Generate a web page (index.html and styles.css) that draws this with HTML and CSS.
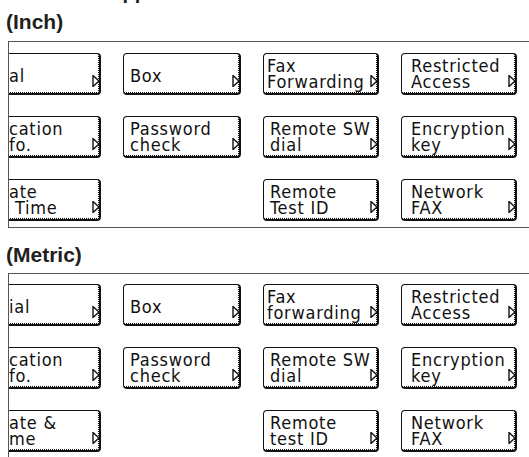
FILE: index.html
```html
<!DOCTYPE html>
<html lang="en">
<head>
  <meta charset="UTF-8" />
  <meta name="viewport" content="width=device-width, initial-scale=1.0"/>
  <title>Fax Settings Panels</title>
  <link rel="stylesheet" href="styles.css">
</head>
<body>

  <div class="cut-line"><span>Applications</span></div>

  <h2>(Inch)</h2>
  <div class="panel">
    <div class="grid">
      <div class="btn edge"><span class="label single">al</span><svg class="arrow" width="8" height="12" viewBox="0 0 8 12"><path d="M1 .5 L7 6 L1 11.5 Z"/></svg></div>
      <div class="btn"><span class="label single">Box</span><svg class="arrow" width="8" height="12" viewBox="0 0 8 12"><path d="M1 .5 L7 6 L1 11.5 Z"/></svg></div>
      <div class="btn tight"><span class="label">Fax<br>Forwarding</span><svg class="arrow" width="8" height="12" viewBox="0 0 8 12"><path d="M1 .5 L7 6 L1 11.5 Z"/></svg></div>
      <div class="btn roomy"><span class="label">Restricted<br>Access</span><svg class="arrow" width="8" height="12" viewBox="0 0 8 12"><path d="M1 .5 L7 6 L1 11.5 Z"/></svg></div>

      <div class="btn edge"><span class="label">cation<br>fo.</span><svg class="arrow" width="8" height="12" viewBox="0 0 8 12"><path d="M1 .5 L7 6 L1 11.5 Z"/></svg></div>
      <div class="btn"><span class="label">Password<br>check</span><svg class="arrow" width="8" height="12" viewBox="0 0 8 12"><path d="M1 .5 L7 6 L1 11.5 Z"/></svg></div>
      <div class="btn"><span class="label">Remote SW<br>dial</span><svg class="arrow" width="8" height="12" viewBox="0 0 8 12"><path d="M1 .5 L7 6 L1 11.5 Z"/></svg></div>
      <div class="btn roomy"><span class="label">Encryption<br>key</span><svg class="arrow" width="8" height="12" viewBox="0 0 8 12"><path d="M1 .5 L7 6 L1 11.5 Z"/></svg></div>

      <div class="btn edge"><span class="label">ate<br>&nbsp;Time</span><svg class="arrow" width="8" height="12" viewBox="0 0 8 12"><path d="M1 .5 L7 6 L1 11.5 Z"/></svg></div>
      <div></div>
      <div class="btn"><span class="label">Remote<br>Test ID</span><svg class="arrow" width="8" height="12" viewBox="0 0 8 12"><path d="M1 .5 L7 6 L1 11.5 Z"/></svg></div>
      <div class="btn roomy"><span class="label">Network<br>FAX</span><svg class="arrow" width="8" height="12" viewBox="0 0 8 12"><path d="M1 .5 L7 6 L1 11.5 Z"/></svg></div>
    </div>
  </div>

  <h2 class="second">(Metric)</h2>
  <div class="panel open">
    <div class="grid">
      <div class="btn edge"><span class="label single">ial</span><svg class="arrow" width="8" height="12" viewBox="0 0 8 12"><path d="M1 .5 L7 6 L1 11.5 Z"/></svg></div>
      <div class="btn"><span class="label single">Box</span><svg class="arrow" width="8" height="12" viewBox="0 0 8 12"><path d="M1 .5 L7 6 L1 11.5 Z"/></svg></div>
      <div class="btn tight"><span class="label">Fax<br>forwarding</span><svg class="arrow" width="8" height="12" viewBox="0 0 8 12"><path d="M1 .5 L7 6 L1 11.5 Z"/></svg></div>
      <div class="btn roomy"><span class="label">Restricted<br>Access</span><svg class="arrow" width="8" height="12" viewBox="0 0 8 12"><path d="M1 .5 L7 6 L1 11.5 Z"/></svg></div>

      <div class="btn edge"><span class="label">cation<br>fo.</span><svg class="arrow" width="8" height="12" viewBox="0 0 8 12"><path d="M1 .5 L7 6 L1 11.5 Z"/></svg></div>
      <div class="btn"><span class="label">Password<br>check</span><svg class="arrow" width="8" height="12" viewBox="0 0 8 12"><path d="M1 .5 L7 6 L1 11.5 Z"/></svg></div>
      <div class="btn"><span class="label">Remote SW<br>dial</span><svg class="arrow" width="8" height="12" viewBox="0 0 8 12"><path d="M1 .5 L7 6 L1 11.5 Z"/></svg></div>
      <div class="btn roomy"><span class="label">Encryption<br>key</span><svg class="arrow" width="8" height="12" viewBox="0 0 8 12"><path d="M1 .5 L7 6 L1 11.5 Z"/></svg></div>

      <div class="btn edge"><span class="label">ate &amp;<br>me</span><svg class="arrow" width="8" height="12" viewBox="0 0 8 12"><path d="M1 .5 L7 6 L1 11.5 Z"/></svg></div>
      <div></div>
      <div class="btn"><span class="label">Remote<br>test ID</span><svg class="arrow" width="8" height="12" viewBox="0 0 8 12"><path d="M1 .5 L7 6 L1 11.5 Z"/></svg></div>
      <div class="btn roomy"><span class="label">Network<br>FAX</span><svg class="arrow" width="8" height="12" viewBox="0 0 8 12"><path d="M1 .5 L7 6 L1 11.5 Z"/></svg></div>
    </div>
  </div>

</body>
</html>
```

FILE: styles.css
```css
body {
  margin: 0;
  background: #fff;
  font-family: "Liberation Sans", Arial, sans-serif;
  color: #231f20;
  overflow: hidden;
}
.cut-line {
  height: 3px;
  overflow: hidden;
}
.cut-line span {
  display: block;
  margin: -20px 0 0 108px;
  font-size: 20px;
  line-height: 24px;
  font-weight: bold;
}
h2 {
  margin: 7px 0 7px 6px;
  font-size: 21px;
  line-height: 24px;
  font-weight: bold;
}
h2.second {
  margin-top: 15px;
  margin-bottom: 6px;
}
.panel {
  margin: 0 -20px 0 8px;
  border: 1px solid #555;
  border-right: none;
  padding: 11px 0 6px;
  overflow: hidden;
}
.panel.open {
  border-bottom: none;
  padding-top: 10px;
}
.grid {
  display: grid;
  grid-template-columns: 118px 118px 116px 116px;
  column-gap: 22px;
  row-gap: 21px;
  margin-left: -26px;
}
.btn {
  height: 42px;
  box-sizing: border-box;
  display: flex;
  align-items: center;
  padding-left: 6px;
  border: 1px solid #111;
  border-right-width: 2px;
  border-bottom-width: 2px;
  border-radius: 4px;
  background:
    linear-gradient(90deg, #111 50%, transparent 0) left bottom / 2px 1px repeat-x,
    linear-gradient(#111 50%, transparent 0) right top / 1px 2px repeat-y,
    #fff;
  color: #111;
  font-family: "DejaVu Sans Condensed", "Liberation Sans Narrow", "Liberation Sans", sans-serif;
  font-size: 18px;
  line-height: 16px;
  letter-spacing: 0.75px;
  white-space: nowrap;
}
.btn.edge {
  padding-left: 25px;
}
.btn.tight {
  padding-left: 3px;
}
.btn.roomy {
  padding-left: 9px;
}
.label {
  flex: 1;
  min-width: 0;
}
.label.single {
  padding-top: 4px;
}
.arrow {
  flex: none;
  align-self: flex-end;
  margin: 0 -1px 6px 0;
}
.arrow path {
  fill: #fff;
  stroke: #111;
  stroke-width: 1.4;
}
```
